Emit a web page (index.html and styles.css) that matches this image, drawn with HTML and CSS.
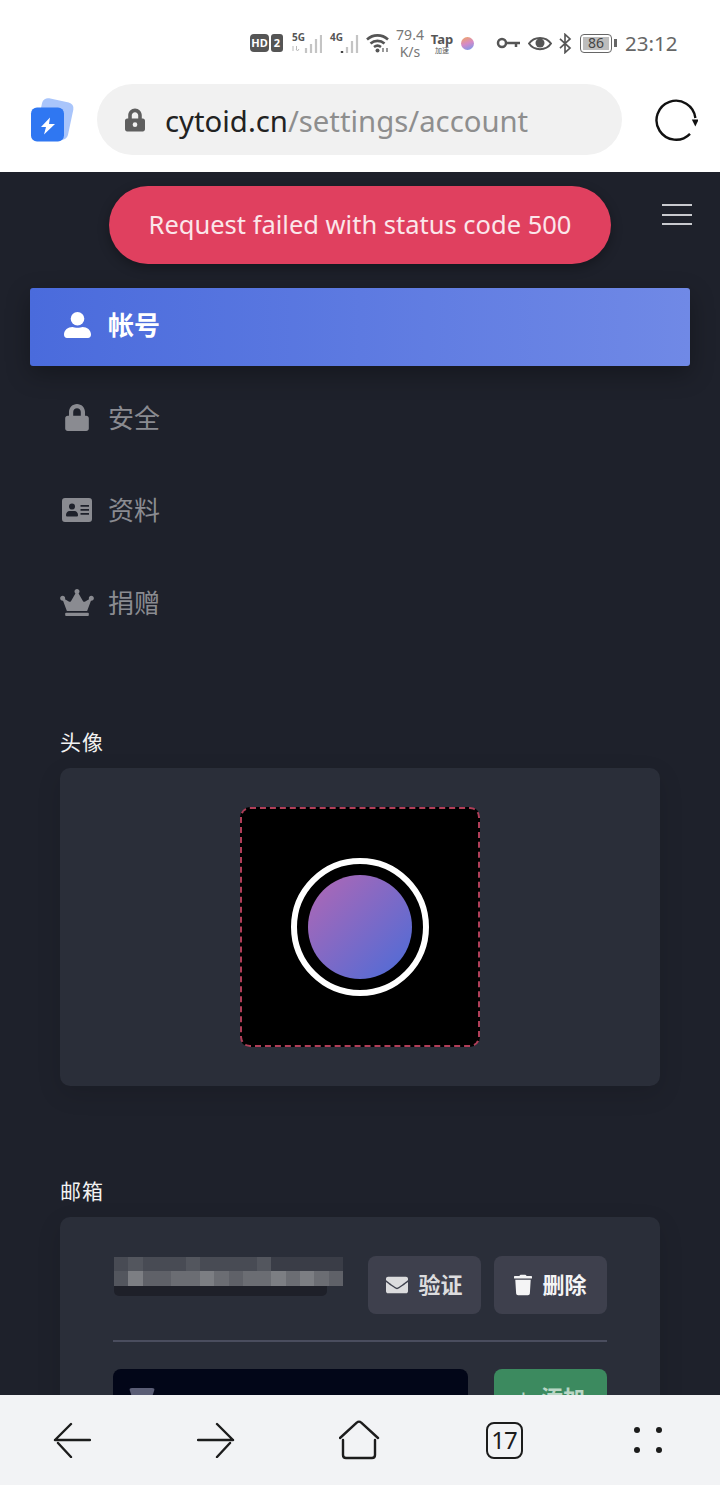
FILE: index.html
```html
<!DOCTYPE html>
<html lang="zh-CN">
<head>
    <meta charset="UTF-8">
    <meta name="viewport" content="width=device-width, initial-scale=1.0">
    <title>Cytoid - 帐号</title>
    <link rel="stylesheet" href="styles.css">
</head>
<body>
    <div class="statusbar">
        <span class="hd">HD</span>
        <span class="sim">2</span>
        <div class="signal first">
            <span class="net">5G</span>
            <svg width="31" height="20" viewBox="0 0 31 20"><path d="M2 12v5M5 15l1.500 2 1.500-2M5.500 12v4" stroke="#bbb" stroke-width="1" fill="none"/><path d="M15 19v-5M20 19V10M25 19V5M30 19V1" stroke="#c4c4c4" stroke-width="2.200"/></svg>
        </div>
        <div class="signal">
            <span class="net">4G</span>
            <svg width="31" height="20" viewBox="0 0 31 20"><path d="M13 19v-2" stroke="#444" stroke-width="2.400"/><path d="M18 19v-6M23 19V7M28 19V1" stroke="#c4c4c4" stroke-width="2.200"/></svg>
        </div>
        <svg class="wifi" width="24" height="20" viewBox="0 0 24 20" fill="none" stroke="#555" stroke-width="2.600"><path d="M1 6.500C7 1 16 1 22 6.500M4.500 10.500c4-3.500 10-3.500 14 0M8 14c2-1.500 5-1.500 7 0"/><circle cx="11.500" cy="17.500" r="2" fill="#555" stroke="none"/><path d="M17 15v4M21 15v4" stroke-width="1.200"/></svg>
        <div class="speed"><span>79.4</span><span>K/s</span></div>
        <div class="tap"><span class="tap-name">Tap</span><span class="tap-sub">加速</span></div>
        <span class="ball"></span>
        <svg class="key" width="25" height="12" viewBox="0 0 25 12" fill="none" stroke="#555" stroke-width="2.500"><circle cx="6" cy="6" r="4"/><path d="M10 6h14M20 6v4"/></svg>
        <svg class="eye" width="24" height="17" viewBox="0 0 24 17"><path d="M1 8.500C6 1 18 1 23 8.500 18 16 6 16 1 8.500z" fill="none" stroke="#555" stroke-width="2"/><circle cx="12" cy="8" r="4.500" fill="#555"/></svg>
        <svg class="bt" width="14" height="21" viewBox="0 0 14 23" fill="none" stroke="#555" stroke-width="1.800"><path d="M1.500 6.500l11 10-5.500 5V1.500l5.500 5-11 10"/></svg>
        <div class="battery"><span class="battery-level">86</span></div>
        <span class="battery-tip"></span>
        <span class="clock">23:12</span>
    </div>

    <div class="browserbar">
        <svg class="applogo" width="46" height="46" viewBox="0 0 46 46"><rect x="9" y="3" width="32" height="38" rx="6" fill="#a9c5fb" transform="rotate(12 25 22)"/><rect x="1" y="10.500" width="33" height="34" rx="6" fill="#2f77f2"/><path d="M20 20.500L11 30h5l-2 7.500L25 27h-6z" fill="#fff"/></svg>
        <div class="urlbox">
            <svg width="20" height="24" viewBox="0 0 448 512"><path fill="#5f5f5f" d="M400 224h-24v-72C376 68.200 307.800 0 224 0S72 68.200 72 152v72H48c-26.500 0-48 21.500-48 48v192c0 26.500 21.500 48 48 48h352c26.500 0 48-21.500 48-48V272c0-26.500-21.500-48-48-48zm-104 0H152v-72c0-39.700 32.300-72 72-72s72 32.300 72 72v72z"/><circle cx="224" cy="360" r="52" fill="#f1f1f1"/></svg>
            <span class="url"><b>cytoid.cn</b>/settings/account</span>
        </div>
        <svg class="reload" width="44" height="44" viewBox="0 0 44 44" fill="none" stroke="#111" stroke-width="2.400"><path d="M36 35.800A19.500 19.500 0 1 1 41.400 20"/><path d="M37.800 21.500h7l-3.500 7z" fill="#111" stroke="none"/></svg>
    </div>

    <main class="page">
        <div class="toast">Request failed with status code 500</div>
        <header class="topbar">
            <div class="burger"><span></span><span></span><span></span></div>
        </header>

        <nav class="menu">
            <a class="menu-item active">
                <span class="menu-icon"><svg width="27" height="26" viewBox="0 0 27 26"><circle cx="13.500" cy="6.800" r="6.800" fill="currentColor"/><path fill="currentColor" d="M8.500 15c2 1 8 1 10 0 4.500 0 8.500 3 8.500 7.500 0 2.300-1.200 3.500-3 3.500H3c-1.800 0-3-1.200-3-3.500C0 18 4 15 8.500 15z"/></svg></span>
                <span class="label">帐号</span>
            </a>
            <a class="menu-item">
                <span class="menu-icon"><svg width="24" height="27" viewBox="0 0 448 512"><path fill="currentColor" d="M400 224h-24v-72C376 68.200 307.800 0 224 0S72 68.200 72 152v72H48c-26.500 0-48 21.500-48 48v192c0 26.500 21.500 48 48 48h352c26.500 0 48-21.500 48-48V272c0-26.500-21.500-48-48-48zm-104 0H152v-72c0-39.700 32.300-72 72-72s72 32.300 72 72v72z"/></svg></span>
                <span class="label">安全</span>
            </a>
            <a class="menu-item">
                <span class="menu-icon"><svg width="30" height="24" viewBox="0 0 30 24"><path fill="currentColor" fill-rule="evenodd" d="M3 0h24a3 3 0 0 1 3 3v18a3 3 0 0 1-3 3H3a3 3 0 0 1-3-3V3a3 3 0 0 1 3-3zM10 5.500a3 3 0 1 0 0 6 3 3 0 0 0 0-6zM4 17c0 1 .5 1.500 1.500 1.500h9c1 0 1.500-.5 1.500-1.500 0-2-1.500-4-3.500-4h-5C5.500 13 4 15 4 17zM18.500 7v1.800H27V7zm0 4v1.800H27V11zm0 4v1.800H27V15z"/></svg></span>
                <span class="label">资料</span>
            </a>
            <a class="menu-item">
                <span class="menu-icon"><svg width="34" height="27" viewBox="0 0 640 512"><path fill="currentColor" d="M528 448H112c-8.800 0-16 7.200-16 16v32c0 8.800 7.200 16 16 16h416c8.800 0 16-7.200 16-16v-32c0-8.800-7.200-16-16-16zm64-320c-26.500 0-48 21.500-48 48 0 7.100 1.600 13.700 4.400 19.800L476 239.200c-15.400 9.200-35.300 4-44.200-11.600L350.300 85C361 76.200 368 63 368 48c0-26.500-21.500-48-48-48s-48 21.500-48 48c0 15 7 28.200 17.600 37l-81.500 142.600c-8.900 15.600-28.900 20.800-44.200 11.600l-72.300-43.400c2.700-6 4.400-12.700 4.400-19.800 0-26.500-21.500-48-48-48S0 149.500 0 176s21.500 48 48 48c2.600 0 5.200-.4 7.700-.8L128 416h384l72.300-192.800c2.500.4 5.100.8 7.700.8 26.500 0 48-21.500 48-48s-21.500-48-48-48z"/></svg></span>
                <span class="label">捐赠</span>
            </a>
        </nav>

        <section class="section avatar-section">
            <h3 class="section-title">头像</h3>
            <div class="card avatar-card">
                <div class="dropzone">
                    <div class="avatar-ring"><div class="avatar"></div></div>
                </div>
            </div>
        </section>

        <section class="section">
            <h3 class="section-title">邮箱</h3>
            <div class="card email-card">
                <div class="email-row">
                    <div class="mosaic">
                        <div class="mosaic-row top">
                            <i class="m2"></i><i class="m3"></i><i class="m2"></i><i class="m2"></i><i class="m2"></i><i class="m3"></i><i class="m2"></i><i class="m2"></i><i class="m2"></i><i class="m2"></i><i class="m3"></i><i class="m1"></i><i class="m1"></i><i class="m1"></i><i class="m1"></i><i class="m1"></i>
                        </div>
                        <div class="mosaic-row">
                            <i class="m3"></i><i class="m6"></i><i class="m4"></i><i class="m4"></i><i class="m5"></i><i class="m5"></i><i class="m6"></i><i class="m5"></i><i class="m4"></i><i class="m5"></i><i class="m5"></i><i class="m6"></i><i class="m5"></i><i class="m6"></i><i class="m5"></i><i class="m4"></i>
                        </div>
                        <div class="mosaic-shadow"></div>
                    </div>
                    <button class="btn"><svg width="22" height="22" viewBox="0 0 512 512"><path fill="currentColor" d="M502.300 190.800c3.900-3.100 9.700-.2 9.700 4.700V400c0 26.500-21.500 48-48 48H48c-26.500 0-48-21.500-48-48V195.600c0-5 5.700-7.800 9.700-4.700 22.400 17.400 52.100 39.500 154.100 113.600 21.100 15.400 56.700 47.800 92.200 47.600 35.700.3 72-32.800 92.300-47.600 102-74.100 131.600-96.300 154-113.700zM256 320c23.200.4 56.600-29.200 73.400-41.400 132.700-96.300 142.800-104.700 173.400-128.700 5.800-4.500 9.200-11.500 9.200-18.900v-19c0-26.500-21.500-48-48-48H48C21.500 64 0 85.500 0 112v19c0 7.400 3.400 14.300 9.200 18.900 30.600 23.900 40.700 32.400 173.400 128.700 16.800 12.200 50.200 41.800 73.400 41.400z"/></svg><span class="btn-text">验证</span></button>
                    <button class="btn btn-white"><svg width="18" height="24" viewBox="0 0 448 512"><path fill="currentColor" d="M432 32H312l-9.400-18.700A24 24 0 0 0 281.100 0H166.800a23.720 23.720 0 0 0-21.400 13.300L136 32H16A16 16 0 0 0 0 48v32a16 16 0 0 0 16 16h416a16 16 0 0 0 16-16V48a16 16 0 0 0-16-16zM53.200 467a48 48 0 0 0 47.900 45h245.800a48 48 0 0 0 47.900-45L416 128H32z"/></svg><span class="btn-text">删除</span></button>
                </div>
                <div class="divider"></div>
                <div class="add-row">
                    <div class="email-input"><span class="input-icon"></span></div>
                    <button class="btn btn-add"><span class="plus">+</span><span class="btn-text">添加</span></button>
                </div>
            </div>
        </section>
    </main>

    <div class="bottombar">
        <svg width="38" height="36" viewBox="0 0 38 36" fill="none" stroke="#1c1c1c" stroke-width="2.400" stroke-linecap="round"><path d="M2 18h35M18 2L2 18M5 21l13 14"/></svg>
        <svg width="38" height="36" viewBox="0 0 38 36" fill="none" stroke="#1c1c1c" stroke-width="2.400" stroke-linecap="round"><path d="M1 18h35M20 2l16 16M33 21L20 35"/></svg>
        <svg width="42" height="40" viewBox="1 0 42 40" fill="none" stroke="#1c1c1c" stroke-width="2.400" stroke-linecap="round"><path d="M2 18L19 2.500c1-1 3-1 4 0L40 18M5 20v15c0 2 1 3 3 3h26c2 0 3-1 3-3V20"/></svg>
        <div class="tabs">17</div>
        <div class="dots"><span></span><span></span><span></span><span></span></div>
    </div>
</body>
</html>
```

FILE: styles.css
```css
* {
    box-sizing: border-box;
}

body {
    margin: 0;
    width: 720px;
    height: 1485px;
    display: flex;
    flex-direction: column;
    overflow: hidden;
    background-color: #fff;
    font-family: "Noto Sans", "Noto Sans CJK SC", sans-serif;
}

/* status bar */
.statusbar {
    height: 72px;
    flex-shrink: 0;
    display: flex;
    align-items: center;
    padding: 14px 0 0 250px;
    color: #555;
}

.hd {
    width: 19px;
    height: 18px;
    border-radius: 4px;
    background-color: #555;
    color: #fff;
    font-size: 11px;
    font-weight: 700;
    line-height: 18px;
    text-align: center;
}

.sim {
    width: 12px;
    height: 18px;
    margin-left: 2px;
    border-radius: 3px;
    background-color: #555;
    color: #fff;
    font-size: 11px;
    font-weight: 700;
    line-height: 18px;
    text-align: center;
}

.signal {
    width: 31px;
    height: 21px;
    margin-left: 7px;
    position: relative;
}

.signal.first {
    margin-left: 8px;
}

.signal svg {
    position: absolute;
    left: 0;
    bottom: 0;
}

.net {
    position: absolute;
    left: 1px;
    top: -2px;
    font-size: 10px;
    font-weight: 700;
    line-height: 12px;
}

.wifi {
    margin-left: 6px;
}

.speed {
    width: 30px;
    margin-left: 5px;
    display: flex;
    flex-direction: column;
    align-items: center;
    font-size: 14px;
    line-height: 17px;
    color: #777;
}

.tap {
    width: 22px;
    margin-left: 6px;
    display: flex;
    flex-direction: column;
    align-items: center;
}

.tap-name {
    font-size: 13px;
    font-weight: 700;
    line-height: 14px;
}

.tap-sub {
    font-size: 7px;
    line-height: 9px;
}

.ball {
    width: 13px;
    height: 13px;
    margin-left: 8px;
    border-radius: 50%;
    background: linear-gradient(160deg, #f2a65e 0%, #d58ac7 50%, #6d9cf0 100%);
}

.key {
    margin-left: 22px;
}

.eye {
    margin-left: 7px;
}

.bt {
    margin-left: 6px;
}

.battery {
    width: 32px;
    height: 19px;
    margin-left: 8px;
    padding: 2px;
    border: 1.500px solid #666;
    border-radius: 4px;
}

.battery-level {
    display: block;
    height: 100%;
    background-color: #bdbdbd;
    font-size: 14px;
    line-height: 12px;
    text-align: center;
    color: #444;
}

.battery-tip {
    width: 3px;
    height: 8px;
    margin-left: 2px;
    background-color: #666;
}

.clock {
    margin-left: 8px;
    font-size: 20.500px;
    color: #666;
}

/* browser address bar */
.browserbar {
    height: 100px;
    flex-shrink: 0;
    display: flex;
    align-items: center;
    padding: 0 22px 5px 30px;
}

.applogo {
    flex-shrink: 0;
}

.urlbox {
    width: 525px;
    height: 71px;
    margin-left: 21px;
    padding-left: 28px;
    display: flex;
    align-items: center;
    gap: 20px;
    border-radius: 36px;
    background-color: #f1f1f1;
}

.url {
    padding-top: 3px;
    font-size: 29.300px;
    color: #8e8e8e;
}

.url b {
    font-weight: 400;
    color: #222;
}

.reload {
    margin-left: 32px;
}

/* page */
.page {
    flex: 1;
    min-height: 0;
    padding: 0 30px;
    position: relative;
    overflow: hidden;
    background-color: #1e212b;
    color: #fff;
}

.toast {
    position: absolute;
    left: 109px;
    top: 14px;
    width: 502px;
    height: 78px;
    border-radius: 39px;
    background-color: #e0405f;
    font-size: 25.500px;
    line-height: 76px;
    text-align: center;
    color: #fbe6ea;
    box-shadow: 0 4px 12px rgba(0, 0, 0, 0.3);
}

.topbar {
    height: 116px;
    display: flex;
    justify-content: flex-end;
    padding-top: 32px;
}

.burger {
    width: 30px;
    height: 21px;
    margin-right: -2px;
    display: flex;
    flex-direction: column;
    justify-content: space-between;
}

.burger span {
    height: 2px;
    background-color: #c9cacf;
}

.menu {
    display: flex;
    flex-direction: column;
    gap: 15px;
}

.menu-item {
    height: 77.500px;
    padding: 0 0 4px 30px;
    display: flex;
    align-items: center;
    border-radius: 3px;
    font-size: 26px;
    color: #8a8b91;
}

.label {
    margin-bottom: 1px;
}

.menu-item.active {
    background: linear-gradient(90deg, #4a6bdc 0%, #7089e6 100%);
    box-shadow: 0 8px 24px rgba(0, 0, 0, 0.3);
    color: #fff;
    font-weight: 700;
}

.menu-icon {
    width: 34px;
    margin-right: 14px;
    display: flex;
    justify-content: center;
}

.section {
    margin: 0 0 91px;
}

.avatar-section {
    margin-top: 85px;
}

.section-title {
    margin: 0 30px 12px;
    font-size: 21px;
    font-weight: 400;
    line-height: 28px;
    letter-spacing: 1px;
    color: #f2f2f2;
}

.card {
    margin: 0 30px;
    border-radius: 10px;
    background-color: #2a2e39;
    box-shadow: 0 8px 24px rgba(0, 0, 0, 0.12);
}

.avatar-card {
    height: 318px;
    padding-top: 39px;
    display: flex;
    justify-content: center;
}

.dropzone {
    width: 240px;
    height: 240px;
    display: flex;
    align-items: center;
    justify-content: center;
    border: 2px dashed #b03e58;
    border-radius: 10px;
    background-color: #000;
}

.avatar-ring {
    width: 138px;
    height: 138px;
    display: flex;
    align-items: center;
    justify-content: center;
    border: 6px solid #fff;
    border-radius: 50%;
}

.avatar {
    width: 104px;
    height: 104px;
    border-radius: 50%;
    background: linear-gradient(135deg, #b267b4 0%, #4a6cd8 100%);
}

.email-card {
    padding: 39px 53px 0;
    height: 260px;
}

.email-row {
    display: flex;
    align-items: center;
    gap: 13px;
}

.mosaic {
    width: 242px;
    height: 58px;
    padding: 1px 0 0 1px;
    display: flex;
    flex-direction: column;
}

.mosaic-row {
    height: 15px;
    width: 229px;
    display: flex;
}

.mosaic-row.top {
    height: 14px;
}

.mosaic-row i {
    flex: 1;
}

.mosaic-shadow {
    width: 213px;
    height: 10px;
    border-radius: 0 0 5px 5px;
    background-color: #1e2029;
}

.m1 { background-color: #3a3d47; }
.m2 { background-color: #484b54; }
.m3 { background-color: #53565e; }
.m4 { background-color: #5f6168; }
.m5 { background-color: #6b6d73; }
.m6 { background-color: #7c7e83; }

.btn {
    width: 113px;
    height: 58px;
    padding: 0;
    display: flex;
    align-items: center;
    justify-content: center;
    gap: 10px;
    border: 0;
    border-radius: 8px;
    background-color: #3e404d;
    color: #dcdcde;
    font-family: inherit;
    font-size: 22px;
    font-weight: 700;
}

.btn-white {
    color: #f4f4f5;
}

.btn-text {
    margin-bottom: 5px;
}

.divider {
    height: 2px;
    margin: 26px 0 27px;
    background-color: #4a4d5e;
}

.add-row {
    display: flex;
    justify-content: space-between;
}

.email-input {
    width: 355px;
    height: 58px;
    padding: 19px 0 0 16px;
    border-radius: 8px;
    background-color: #020618;
}

.input-icon {
    display: block;
    width: 26px;
    height: 24px;
    border-radius: 3px 3px 0 0;
    background-color: #5a5d75;
    clip-path: polygon(0 0, 100% 0, 70% 100%, 30% 100%);
}

.btn-add {
    background-color: #3c8a5f;
    color: #b9d6c5;
}

.plus {
    font-size: 26px;
    font-weight: 400;
}

/* browser bottom bar */
.bottombar {
    height: 90px;
    flex-shrink: 0;
    display: grid;
    grid-template-columns: repeat(5, 1fr);
    align-items: center;
    justify-items: center;
    background-color: #f2f3f5;
}

.tabs {
    width: 37px;
    height: 37px;
    border: 2.400px solid #1c1c1c;
    border-radius: 8px;
    font-size: 24px;
    line-height: 32px;
    letter-spacing: -1px;
    text-align: center;
    color: #1c1c1c;
}

.dots {
    width: 28px;
    height: 26px;
    display: grid;
    grid-template-columns: 6px 6px;
    justify-content: space-between;
    align-content: space-between;
}

.dots span {
    height: 6px;
    border-radius: 50%;
    background-color: #1c1c1c;
}
```
